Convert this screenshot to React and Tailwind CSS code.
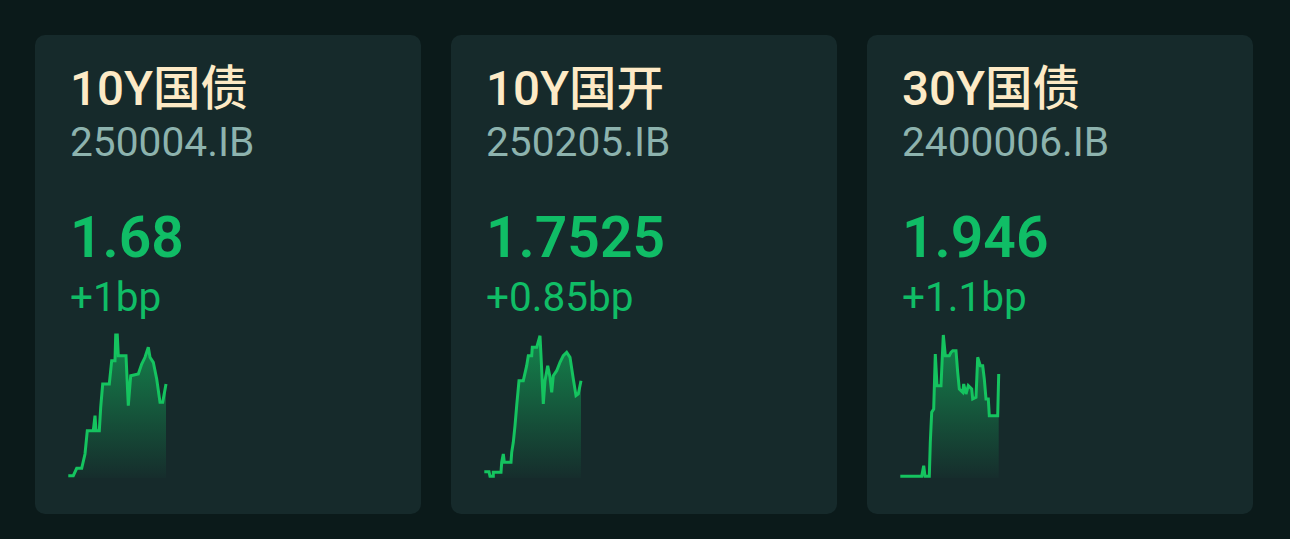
import React from "react";

// chart points are measured in page pixels; each chart's viewBox starts at its own left edge
const bonds = [
  {
    name: "10Y国债",
    code: "250004.IB",
    price: "1.68",
    change: "+1bp",
    x0: 66,
    id: "g1",
    points:
      "68.3,476.7 73.3,476.7 76.7,469.3 81.7,469.3 85,455 87.3,431.7 93.3,431.7 95,416.7 96,431.7 99.3,431.7 100.7,408.3 102.7,385 109.3,385 111.7,361.7 115,361.7 115.7,336 117.3,336 118.3,356.7 126,356.7 128.3,406.7 130.7,376.7 138.3,375 141.7,365 145,358.3 148.3,348.3 150,358.3 153.3,363.3 156.7,380 160,403.3 162.7,403.3 166,385",
  },
  {
    name: "10Y国开",
    code: "250205.IB",
    price: "1.7525",
    change: "+0.85bp",
    x0: 482,
    id: "g2",
    points:
      "484.3,472.7 489,472.7 490,477.3 493.3,477.3 493.3,473.3 501,473.3 501.7,463.3 503.3,455 504.3,463.3 511,463.3 511.7,453.3 513.3,443.3 515,426.7 516.7,406.7 519,381.7 523.3,381.7 526.7,366.7 528.3,356.7 531.7,356.7 532.3,348.3 536.7,348.3 540,336.7 541,356.7 543.3,405 545,381.7 547.7,366.7 550,378.3 551.7,393.3 553.3,376.7 556.7,371.7 560,363.3 563.3,356.7 566.7,353.3 570,358.3 573.3,380 576,396.7 578.3,395 581,381.7",
  },
  {
    name: "30Y国债",
    code: "2400006.IB",
    price: "1.946",
    change: "+1.1bp",
    x0: 897,
    id: "g3",
    points:
      "899.3,477.3 920.7,477.3 922.7,466.7 924,477.3 928.3,477.3 929.3,443.3 930.7,413.3 932.7,410 934.3,355 936,386.7 940,386.7 942.3,336 944.3,356.7 948.3,356.7 950,353.3 951.7,351.7 955,351.7 956.7,373.3 958.3,390 961.7,393.3 962.7,385 965,395 967.3,386.7 970.7,390 971.7,400 975,398.3 976.7,358.3 979.3,366.7 981.7,366.7 983.3,380 985,400 987.3,400 988.3,416.7 996.7,416.7 997.7,375",
  },
];

const Spark = ({ bond }) => {
  const pts = bond.points.split(" ");
  const first = pts[0].split(",")[0];
  const last = pts[pts.length - 1].split(",")[0];
  const area = `${bond.points} ${last},479 ${first},479`;

  return (
    <svg
      width="106"
      height="146"
      viewBox={`${bond.x0} 334 106 146`}
      className="ml-[-4px] mt-[13px] block">
      <defs>
        <linearGradient id={bond.id} x1="0" y1="334" x2="0" y2="479" gradientUnits="userSpaceOnUse">
          <stop offset="0" stopColor="#13b85f" stopOpacity="0.65" />
          <stop offset="1" stopColor="#13b85f" stopOpacity="0.02" />
        </linearGradient>
      </defs>
      <polygon points={area} fill={`url(#${bond.id})`} />
      <polyline
        points={bond.points}
        fill="none"
        stroke="#15c35f"
        strokeWidth="3"
        strokeLinejoin="miter"
      />
    </svg>
  );
};

const BondCard = ({ bond }) => (
  <div className="flex-1 h-[479px] rounded-[10px] bg-[#162a2b] pl-[35px] pt-[26px]">
    {/* name + code */}
    <div className="text-[47.5px] leading-[56px] font-medium text-[#fdeac6]">
      {bond.name}
    </div>
    <div className="mt-[2px] text-[40.7px] leading-[46px] text-[#8db3ae]">
      {bond.code}
    </div>

    {/* yield + change */}
    <div className="mt-[41px] text-[57px] leading-[64px] font-semibold text-[#10bd66]">
      {bond.price}
    </div>
    <div className="mt-[4px] text-[40.5px] leading-[46px] text-[#10bd66]">
      {bond.change}
    </div>

    <Spark bond={bond} />
  </div>
);

const App = () => {
  return (
    <div
      className="w-full h-[539px] bg-[#0b1a1a] flex gap-[30px] pl-[35px] pr-[37px] pt-[35px]"
      style={{ fontFamily: "Roboto, 'Noto Sans CJK SC', sans-serif" }}>
      {bonds.map((b) => (
        <BondCard key={b.code} bond={b} />
      ))}
    </div>
  );
};

export default App;
